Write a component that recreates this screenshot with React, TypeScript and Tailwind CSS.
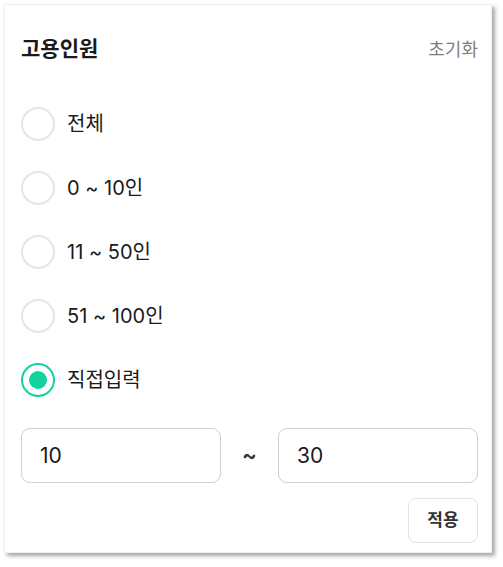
import React, { useState } from "react"

const options = ["전체", "0 ~ 10인", "11 ~ 50인", "51 ~ 100인", "직접입력"]

const font = { fontFamily: '"Inter", "Noto Sans CJK KR", sans-serif' }

function Radio({ checked }: { checked: boolean }) {
  if (checked) {
    return (
      <span className="flex items-center justify-center w-[34px] h-[34px] rounded-full border-2 border-[#10d3a0] bg-white">
        <span className="w-[18px] h-[18px] rounded-full bg-[#10d3a0]" />
      </span>
    )
  }
  return <span className="w-[34px] h-[34px] rounded-full border-2 border-[#e6e6e6] bg-white" />
}

export default function App() {
  const [selected, setSelected] = useState(4)
  const [min, setMin] = useState("10")
  const [max, setMax] = useState("30")

  return (
    <div className="p-1 bg-white min-h-[567px]" style={font}>
      <div className="w-[488px] h-[549px] bg-white border border-[#f0f0f0] shadow-[3px_3px_4px_rgba(0,0,0,0.35)] pl-[16px] pr-[13px] pt-[29px] pb-[9px] flex flex-col">
        <div className="flex items-center justify-between h-[30px]">
          <h2 className="text-[21px] font-bold text-[#1a1a1a]">고용인원</h2>
          <button className="text-[18px] text-[#7f7f7f]">초기화</button>
        </div>

        <div className="mt-[28px] flex flex-col">
          {options.map((label, i) => (
            <label
              key={label}
              className="flex items-center gap-[12px] h-[64px] cursor-pointer"
              onClick={() => setSelected(i)}
            >
              <Radio checked={selected === i} />
              <span className="text-[20px] text-[#1a1a1a]">{label}</span>
            </label>
          ))}
        </div>

        <div className="mt-[16px] flex items-center h-[56px]">
          <input
            value={min}
            onChange={(e) => setMin(e.target.value)}
            className="flex-1 min-w-0 h-full rounded-[9px] border-[1.5px] border-[#cfcfcf] px-[18px] text-[21px] text-[#1a1a1a] outline-none"
            style={font}
          />
          <span className="w-[57px] text-center text-[22px] font-semibold text-[#333]">~</span>
          <input
            value={max}
            onChange={(e) => setMax(e.target.value)}
            className="flex-1 min-w-0 h-full rounded-[9px] border-[1.5px] border-[#cfcfcf] px-[18px] text-[21px] text-[#1a1a1a] outline-none"
            style={font}
          />
        </div>

        <div className="mt-[15px] flex justify-end">
          <button className="w-[70px] h-[45px] rounded-[8px] border border-[#e3e3e3] text-[17px] font-bold text-[#333]">
            적용
          </button>
        </div>
      </div>
    </div>
  )
}
